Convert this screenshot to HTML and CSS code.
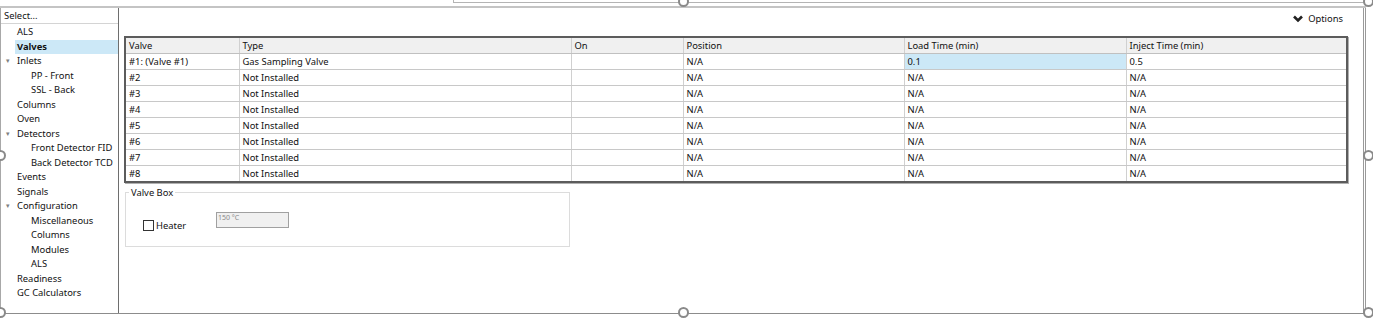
FILE: index.html
```html
<!DOCTYPE html>
<html>
<head>
  <title>Valves</title>
  <meta name="viewport" content="width=device-width, initial-scale=1">
  <link rel="icon" href="data:,">
  <link rel="stylesheet" href="styles.css">
</head>
<body>
  <div class="stage">
    <div class="top-strip"></div>
    <div class="window">
      <aside class="tree">
        <div class="tree-head">Select...</div>
        <ul class="tree-list">
          <li class="lvl1">ALS</li>
          <li class="lvl1 selected">Valves</li>
          <li class="lvl1"><span class="exp">&#9662;</span>Inlets</li>
          <li class="lvl2">PP - Front</li>
          <li class="lvl2">SSL - Back</li>
          <li class="lvl1">Columns</li>
          <li class="lvl1">Oven</li>
          <li class="lvl1"><span class="exp">&#9662;</span>Detectors</li>
          <li class="lvl2">Front Detector FID</li>
          <li class="lvl2">Back Detector TCD</li>
          <li class="lvl1">Events</li>
          <li class="lvl1">Signals</li>
          <li class="lvl1"><span class="exp">&#9662;</span>Configuration</li>
          <li class="lvl2">Miscellaneous</li>
          <li class="lvl2">Columns</li>
          <li class="lvl2">Modules</li>
          <li class="lvl2">ALS</li>
          <li class="lvl1">Readiness</li>
          <li class="lvl1">GC Calculators</li>
        </ul>
      </aside>
      <main class="content">
        <div class="options">
          <svg class="chevron" width="10" height="8" viewBox="0 0 10 8">
            <path d="M1 1.5 L5 5.5 L9 1.5" fill="none" stroke="#222" stroke-width="2.6"/>
          </svg>
          <span>Options</span>
        </div>
        <table class="grid">
          <colgroup>
            <col style="width: 114px">
            <col style="width: 332px">
            <col style="width: 112px">
            <col style="width: 221px">
            <col style="width: 222px">
            <col>
          </colgroup>
          <thead>
            <tr>
              <th>Valve</th>
              <th>Type</th>
              <th>On</th>
              <th>Position</th>
              <th>Load Time (min)</th>
              <th>Inject Time (min)</th>
            </tr>
          </thead>
          <tbody>
            <tr><td>#1: (Valve #1)</td><td>Gas Sampling Valve</td><td></td><td>N/A</td><td class="active">0.1</td><td>0.5</td></tr>
            <tr><td>#2</td><td>Not Installed</td><td></td><td>N/A</td><td>N/A</td><td>N/A</td></tr>
            <tr><td>#3</td><td>Not Installed</td><td></td><td>N/A</td><td>N/A</td><td>N/A</td></tr>
            <tr><td>#4</td><td>Not Installed</td><td></td><td>N/A</td><td>N/A</td><td>N/A</td></tr>
            <tr><td>#5</td><td>Not Installed</td><td></td><td>N/A</td><td>N/A</td><td>N/A</td></tr>
            <tr><td>#6</td><td>Not Installed</td><td></td><td>N/A</td><td>N/A</td><td>N/A</td></tr>
            <tr><td>#7</td><td>Not Installed</td><td></td><td>N/A</td><td>N/A</td><td>N/A</td></tr>
            <tr><td>#8</td><td>Not Installed</td><td></td><td>N/A</td><td>N/A</td><td>N/A</td></tr>
          </tbody>
        </table>
        <fieldset class="valve-box">
          <legend>Valve Box</legend>
          <div class="heater-row">
            <label class="check"><span class="box"></span>Heater</label>
            <div class="temp">150 °C</div>
          </div>
        </fieldset>
      </main>
      <div class="sel-edge"></div>
    </div>

    <span class="handle" style="left: 678px; top: -4px"></span>
    <span class="handle" style="left: 1363px; top: -4px"></span>
    <span class="handle" style="left: 1363px; top: 150px"></span>
    <span class="handle" style="left: 1363px; top: 307px"></span>
    <span class="handle" style="left: 678px; top: 307px"></span>
    <span class="handle" style="left: -5px; top: 150px"></span>
    <span class="handle" style="left: -5px; top: 307px"></span>
  </div>
</body>
</html>
```

FILE: styles.css
```css
body {
  margin: 0;
  background: #ffffff;
  font-family: "Noto Sans", "Open Sans", sans-serif;
  font-size: 9.4px;
  color: #111111;
  overflow: hidden;
}

.stage {
  position: relative;
  width: 1373px;
  height: 322px;
}

.top-strip {
  margin-left: 453px;
  width: 913px;
  height: 2px;
  border-left: 1px solid #b4b4b4;
  border-bottom: 1px solid #b4b4b4;
}

.window {
  display: flex;
  margin-top: 3px;
  width: 1366px;
  height: 305px;
  border-top: 2px solid #c4c4c4;
  border-bottom: 1px solid #8c8c8c;
}

.tree {
  width: 117px;
  flex: none;
  border-left: 1px solid #a8a8a8;
  border-right: 1px solid #6e6e6e;
  display: flex;
  flex-direction: column;
}

.tree-head {
  height: 15px;
  line-height: 15px;
  padding-left: 3px;
  border-bottom: 1px solid #d4d4d4;
}

.tree-list {
  list-style: none;
  margin: 1px 0 0 0;
  padding: 0;
}

.tree-list li {
  height: 14.5px;
  line-height: 14.5px;
  white-space: nowrap;
  position: relative;
}

.lvl1 {
  padding-left: 16px;
}

.lvl2 {
  padding-left: 30px;
}

.selected {
  margin-left: 14px;
  padding-left: 2px;
  background: #cce8f7;
  font-weight: bold;
}

.exp {
  position: absolute;
  left: 5px;
  top: 0;
  font-size: 7px;
  color: #808080;
}

.content {
  flex: 1;
  padding: 0 17px 0 5px;
  display: flex;
  flex-direction: column;
}

.options {
  height: 28px;
  display: flex;
  align-items: center;
  justify-content: flex-end;
  gap: 5px;
  padding-right: 5px;
  padding-bottom: 7px;
  box-sizing: border-box;
}

.chevron {
  margin-top: 1px;
}

.grid {
  width: 1224px;
  border-collapse: collapse;
  table-layout: fixed;
  border: 2px solid #5c5c5c;
  box-shadow: 1px 1px 0 #b0b0b0;
}

.grid th,
.grid td {
  height: 15px;
  padding: 0 3px;
  text-align: left;
  font-weight: normal;
  white-space: nowrap;
  border-right: 1px solid #d0d0d0;
  border-bottom: 1px solid #c8c8c8;
  line-height: 15px;
}

.grid th {
  background: #f0f0f0;
  border-bottom: 1px solid #c0c0c0;
}

.grid tr:last-child td {
  border-bottom: none;
}

.grid td.active {
  background: #cce8f7;
}

.valve-box {
  width: 445px;
  height: 61px;
  margin: 3px 0 0 1px;
  padding: 0;
  border: 1px solid #dcdcdc;
  box-sizing: border-box;
}

.valve-box legend {
  padding: 0 2px;
  margin-left: 3px;
}

.heater-row {
  display: flex;
  align-items: flex-start;
  margin-top: 13px;
  padding-left: 17px;
}

.check {
  display: flex;
  align-items: center;
  gap: 2px;
  width: 73px;
  margin-top: 7px;
}

.box {
  width: 9px;
  height: 9px;
  border: 1px solid #333333;
  background: #ffffff;
}

.temp {
  width: 70px;
  height: 14px;
  border: 1px solid #a0a0a0;
  background: #f0f0f0;
  color: #8a8a8a;
  font-size: 7px;
  line-height: 10px;
  padding-left: 1px;
}

.sel-edge {
  width: 5px;
  margin-left: -2px;
  border-left: 1px solid #9a9a9a;
  border-right: 1px solid #9a9a9a;
}

.handle {
  position: absolute;
  width: 7px;
  height: 7px;
  border: 2px solid #8a8a8a;
  border-radius: 50%;
  background: #ffffff;
}
```
